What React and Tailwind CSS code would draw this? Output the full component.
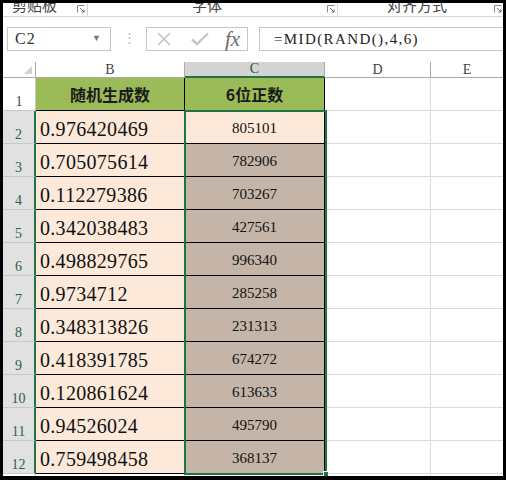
import React from 'react'

const serif = { fontFamily: '"Liberation Serif", "Noto Sans CJK SC", serif' }

const data = [
  ['0.976420469', '805101'],
  ['0.705075614', '782906'],
  ['0.112279386', '703267'],
  ['0.342038483', '427561'],
  ['0.498829765', '996340'],
  ['0.9734712', '285258'],
  ['0.348313826', '231313'],
  ['0.418391785', '674272'],
  ['0.120861624', '613633'],
  ['0.94526024', '495790'],
  ['0.759498458', '368137'],
]

function Launcher() {
  return (
    <svg width="8" height="8" viewBox="0 0 8 8" className="mt-[2px] shrink-0">
      <path d="M0.5 7.5V0.5H7.5" fill="none" stroke="#8a8a8a" strokeWidth="1" />
      <path d="M3 3L7 7M4.5 7H7V4.5" fill="none" stroke="#6b6b6b" strokeWidth="1" />
    </svg>
  )
}

function Ribbon() {
  return (
    <div className="flex h-[14px] shrink-0 overflow-hidden border-b border-[#d6d6d6] bg-white text-[15px] leading-none text-[#444]"
      style={{ fontFamily: '"Noto Sans CJK SC", sans-serif' }}>
      <div className="flex w-[85px] border-r border-[#d6d6d6] pl-[9px]">
        <span className="-mt-[6px]">剪贴板</span>
        <span className="ml-[20px]"><Launcher /></span>
      </div>
      <div className="flex w-[250px] border-r border-[#d6d6d6] pl-[104px]">
        <span className="-mt-[6px]">字体</span>
        <span className="ml-[105px]"><Launcher /></span>
      </div>
      <div className="flex flex-1 pl-[49px]">
        <span className="-mt-[6px]">对齐方式</span>
        <span className="ml-[47px]"><Launcher /></span>
      </div>
    </div>
  )
}

function FormulaBar() {
  return (
    <div className="flex h-[45px] shrink-0 items-start bg-white pt-[10px]">
      <div className="ml-[4px] flex h-[24px] w-[104px] items-center border border-[#c6c6c6] pl-[7px] pr-[9px] text-[16px] text-[#333]" style={serif}>
        <span className="tracking-[1px]">C2</span>
        <span className="ml-auto text-[9px] text-[#777]">▼</span>
      </div>
      <div className="ml-[12px] mt-[4px] text-[13px] leading-none text-[#bdbdbd]">⋮</div>
      <div className="ml-[10px] flex h-[24px] w-[102px] items-center border border-[#c6c6c6]">
        <svg width="16" height="16" viewBox="0 0 16 16" className="ml-[9px]">
          <path d="M2 2L14 14M14 2L2 14" stroke="#c4c4c4" strokeWidth="1.6" />
        </svg>
        <svg width="20" height="16" viewBox="0 0 20 16" className="ml-[18px]">
          <path d="M2 8.5L7 13L18 2.5" fill="none" stroke="#c4c4c4" strokeWidth="2.4" />
        </svg>
        <span className="ml-[15px] text-[21px] italic leading-none text-[#6a6a6a]" style={serif}>fx</span>
      </div>
      <div className="ml-[11px] flex h-[24px] flex-1 items-center border border-r-0 border-[#c6c6c6] pl-[14px] text-[15px] tracking-[1.4px] text-[#222]" style={serif}>
        =MID(RAND(),4,6)
      </div>
    </div>
  )
}

function ColHeader() {
  return (
    <div className="flex h-[16px] shrink-0 bg-white text-[14px] leading-none text-[#444]" style={serif}>
      <div className="relative w-[33px] border-b border-r border-[#ababab]">
        <svg width="8" height="8" viewBox="0 0 8 8" className="absolute bottom-[3px] right-[3px]">
          <path d="M8 0V8H0Z" fill="#d0d0d0" />
        </svg>
      </div>
      <div className="flex w-[149px] items-center justify-center border-b border-r border-[#ababab]">B</div>
      <div className="flex w-[140px] items-center justify-center border-b-2 border-r border-b-[#217346] border-r-[#ababab] bg-[#d3d3d3] text-[#2a5a3d]">C</div>
      <div className="flex w-[106px] items-center justify-center border-b border-r border-[#ababab]">D</div>
      <div className="flex w-[72px] items-center justify-center border-b border-[#ababab]">E</div>
    </div>
  )
}

export default function App() {
  return (
    <div className="h-[480px] w-[506px] bg-black pb-[4px] pl-[3px] pr-[3px] pt-[3px]">
      <div className="flex h-[473px] w-[500px] flex-col overflow-hidden bg-white">
        <Ribbon />
        <FormulaBar />
        <ColHeader />
        <div className="relative">
          {/* row 1: table header */}
          <div className="flex h-[33px]">
            <div className="flex w-[33px] items-end justify-center border-b border-r border-[#c8c8c8] bg-white pb-[1px] text-[14px] leading-none text-[#444]" style={serif}>1</div>
            <div className="flex w-[149px] items-center justify-center border-b border-r border-black bg-[#9bbb59] text-[16px] font-bold text-[#1a1a1a]" style={{ fontFamily: '"Noto Sans CJK SC", sans-serif' }}>随机生成数</div>
            <div className="flex w-[140px] items-center justify-center border-b border-r border-black bg-[#9bbb59] text-[16px] font-bold text-[#1a1a1a]" style={{ fontFamily: '"Noto Sans CJK SC", sans-serif' }}>6位正数</div>
            <div className="w-[106px] border-b border-r border-[#dadada]" />
            <div className="w-[72px] border-b border-[#dadada]" />
          </div>
          {data.map(([b, c], i) => (
            <div key={i} className="flex h-[33px]">
              <div className="flex w-[33px] items-end justify-center border-b border-r-2 border-b-[#c8c8c8] border-r-[#217346] bg-[#e1e1e1] pb-[1px] text-[14px] leading-none text-[#2f5f45]" style={serif}>{i + 2}</div>
              <div className="flex w-[149px] items-end border-b border-r border-black bg-[#fde9d9] pb-[4px] pl-[4px] text-[20px] leading-none tracking-[0.3px] text-[#111]" style={serif}>{b}</div>
              <div className={`flex w-[140px] items-end justify-center border-b border-r border-black pb-[7px] text-[15px] leading-none text-[#111] ${i === 0 ? 'bg-[#fde9d9]' : 'bg-[#c5b5a8]'}`} style={serif}>{c}</div>
              <div className="w-[106px] border-b border-r border-[#dadada]" />
              <div className="w-[72px] border-b border-[#dadada]" />
            </div>
          ))}
          <div className="flex h-[33px]">
            <div className="w-[33px] border-r border-[#c8c8c8]" />
            <div className="w-[149px] border-r border-[#dadada]" />
            <div className="w-[140px] border-r border-[#dadada]" />
            <div className="w-[106px] border-r border-[#dadada]" />
          </div>
          {/* selection C2:C12 */}
          <div className="pointer-events-none absolute left-[181px] top-[32px] h-[365px] w-[143px] border-2 border-[#217346]">
            <div className="absolute -bottom-[4px] -right-[4px] h-[6px] w-[6px] border border-white bg-[#217346]" />
          </div>
        </div>
      </div>
    </div>
  )
}
